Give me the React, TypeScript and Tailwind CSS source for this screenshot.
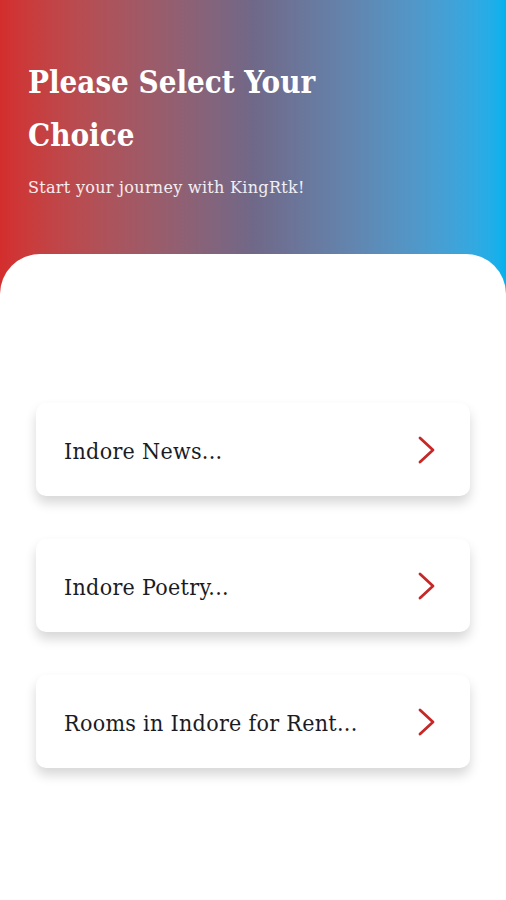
const choices = ['Indore News...', 'Indore Poetry...', 'Rooms in Indore for Rent...'];

function Chevron() {
  return (
    <svg width="20" height="28" viewBox="0 0 20 28" fill="none" className="text-[#c62828]">
      <polyline points="4,2 17,14 4,26" stroke="currentColor" strokeWidth="2.8" strokeLinecap="round" strokeLinejoin="round" />
    </svg>
  );
}

export default function App() {
  return (
    <div
      className="min-h-[900px] flex flex-col bg-gradient-to-r from-[#d42d2d] via-[#706888] to-[#00b2ee]"
      style={{ fontFamily: '"DejaVu Serif Condensed", "DejaVu Serif", serif' }}
    >
      <header className="h-[254px] px-[28px] pt-[56px] text-white">
        <h1 className="text-[31px] leading-[53px] font-bold w-[320px]">Please Select Your Choice</h1>
        <p className="mt-[14px] text-[16px] tracking-[0.3px] text-white/90" style={{ fontFamily: '"DejaVu Serif", serif' }}>
          Start your journey with KingRtk!
        </p>
      </header>

      <main className="flex-1 bg-white rounded-t-[40px] px-[36px] pt-[149px] flex flex-col gap-[43px]">
        {choices.map((c) => (
          <button
            key={c}
            className="h-[93px] w-full bg-white rounded-[10px] flex items-center justify-between pl-[28px] pr-[34px] shadow-[0_7px_12px_rgba(0,0,0,0.16)]"
          >
            <span className="text-[23px] tracking-[0.3px] text-[#1b1b24] pt-[4px]">{c}</span>
            <Chevron />
          </button>
        ))}
      </main>
    </div>
  );
}
